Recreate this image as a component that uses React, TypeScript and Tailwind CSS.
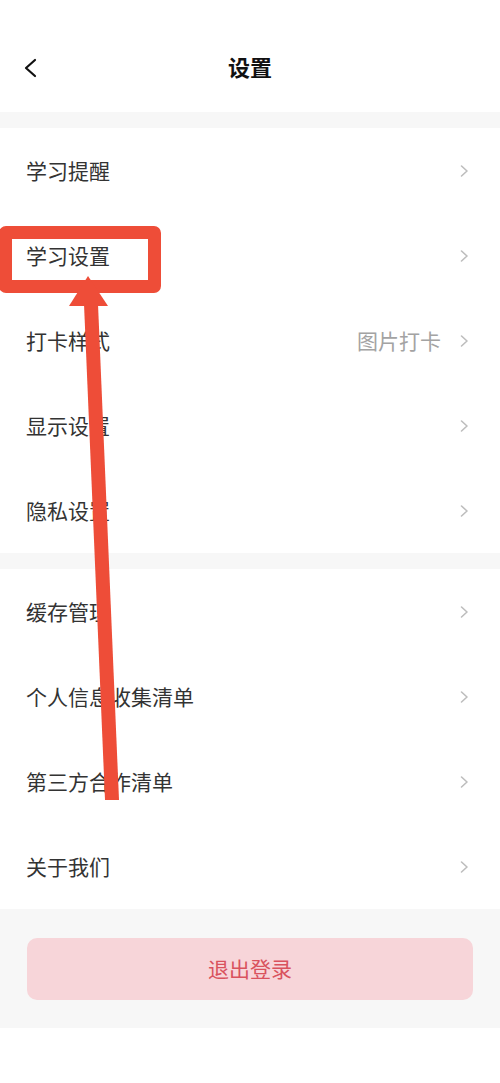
import { Fragment } from "react"

const FONT = { fontFamily: '"Noto Sans CJK SC", "Noto Sans", sans-serif' }

type Item = { label: string; value?: string }

const SECTION_ONE: Item[] = [
  { label: "学习提醒" },
  { label: "学习设置" },
  { label: "打卡样式", value: "图片打卡" },
  { label: "显示设置" },
  { label: "隐私设置" },
]

const SECTION_TWO: Item[] = [
  { label: "缓存管理" },
  { label: "个人信息收集清单" },
  { label: "第三方合作清单" },
  { label: "关于我们" },
]

function ChevronRight() {
  return (
    <svg width="10" height="16" viewBox="0 0 10 16" fill="none" className="ml-[18px]">
      <path d="M2.5 3 L8 8 L2.5 13" stroke="#bdbdbd" strokeWidth="1.6" strokeLinecap="round" strokeLinejoin="round" />
    </svg>
  )
}

function Row({ item }: { item: Item }) {
  return (
    <div className="h-[85px] flex items-center pl-[26px] pr-[31px]">
      <span className="text-[21px] text-[#333333] flex-1 leading-none">{item.label}</span>
      {item.value && <span className="text-[21px] text-[#a3a3a3] leading-none">{item.value}</span>}
      <ChevronRight />
    </div>
  )
}

function Section({ items }: { items: Item[] }) {
  return (
    <section className="bg-white">
      {items.map((item) => (
        <Fragment key={item.label}>
          <Row item={item} />
        </Fragment>
      ))}
    </section>
  )
}

export default function App() {
  return (
    <div className="relative w-[500px] h-[1083px] bg-white overflow-hidden" style={FONT}>
      <header className="h-[112px] flex items-center relative">
        <svg width="16" height="20" viewBox="0 0 16 20" fill="none" className="absolute left-[22px] top-[58px]">
          <path d="M13 2 L4 10 L13 18" stroke="#111111" strokeWidth="2.2" strokeLinecap="round" strokeLinejoin="round" />
        </svg>
        <h1 className="w-full text-center text-[22px] font-bold text-[#111111] pt-[20px]">设置</h1>
      </header>

      <div className="h-4 bg-[#f7f7f7]" />
      <Section items={SECTION_ONE} />
      <div className="h-4 bg-[#f7f7f7]" />
      <Section items={SECTION_TWO} />

      <div className="bg-[#f7f7f7] pt-[29px] pb-[28px] px-[27px]">
        <button className="w-full h-[62px] rounded-[10px] bg-[#f7d5d9] text-[#d9525d] text-[21px]">
          退出登录
        </button>
      </div>

      {/* annotation: highlight box */}
      <div className="absolute left-[-1px] top-[226px] w-[162px] h-[67px] border-[13px] border-[#ee4d38] rounded-[7px]" />

      {/* annotation: arrow */}
      <svg className="absolute left-0 top-0 pointer-events-none" width="500" height="1083" viewBox="0 0 500 1083">
        <polygon points="88,276 69,306 108,306" fill="#ee4d38" />
        <polygon points="84,304 98,304 119,800 105,800" fill="#ee4d38" />
      </svg>
    </div>
  )
}
